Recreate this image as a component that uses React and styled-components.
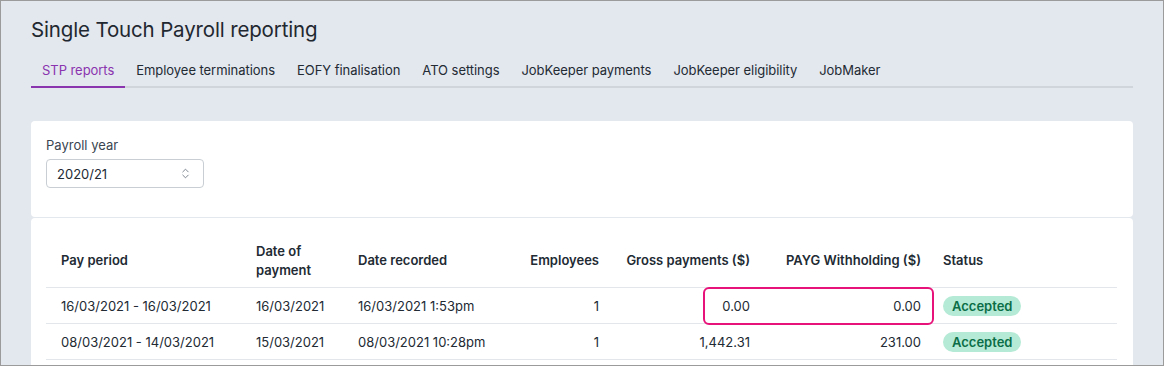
import React from "react";
import styled, { createGlobalStyle } from "styled-components";
import { ChevronsUpDown } from "lucide-react";

const GlobalStyle = createGlobalStyle`
  html, body {
    margin: 0;
    padding: 0;
    background: #e3e7ee;
  }
  body {
    font-family: Inter, "Noto Sans", "Liberation Sans", sans-serif;
    color: #222a33;
  }
`;

const tabs = [
  "STP reports",
  "Employee terminations",
  "EOFY finalisation",
  "ATO settings",
  "JobKeeper payments",
  "JobKeeper eligibility",
  "JobMaker",
];

const rows = [
  {
    period: "16/03/2021 - 16/03/2021",
    paid: "16/03/2021",
    recorded: "16/03/2021 1:53pm",
    employees: "1",
    gross: "0.00",
    payg: "0.00",
    status: "Accepted",
    flagged: true,
  },
  {
    period: "08/03/2021 - 14/03/2021",
    paid: "15/03/2021",
    recorded: "08/03/2021 10:28pm",
    employees: "1",
    gross: "1,442.31",
    payg: "231.00",
    status: "Accepted",
  },
];

const columns = [
  { key: "period", label: "Pay period", width: 199 },
  { key: "paid", label: "Date of payment", width: 102 },
  { key: "recorded", label: "Date recorded", width: 167 },
  { key: "employees", label: "Employees", width: 96, right: true },
  { key: "gross", label: "Gross payments ($)", width: 151, right: true },
  { key: "payg", label: "PAYG Withholding ($)", width: 171, right: true },
  { key: "status", label: "Status", width: 185 },
];

function App() {
  return (
    <>
      <GlobalStyle />
      <Frame>
        <Title>Single Touch Payroll reporting</Title>
        <TabBar>
          {tabs.map((t, i) => (
            <Tab key={t} active={i === 0}>
              {t}
            </Tab>
          ))}
        </TabBar>

        <FilterCard>
          <Label>Payroll year</Label>
          <Select>
            <span>2020/21</span>
            <ChevronsUpDown size={13} strokeWidth={1.6} color="#6b7480" />
          </Select>
        </FilterCard>

        <TableCard>
          <Table>
            <colgroup>
              {columns.map((c) => (
                <col key={c.key} style={{ width: c.width }} />
              ))}
            </colgroup>
            <thead>
              <tr>
                {columns.map((c) => (
                  <Th key={c.key} right={c.right}>
                    {c.label}
                  </Th>
                ))}
              </tr>
            </thead>
            <tbody>
              {rows.map((r, i) => (
                <tr key={i}>
                  {columns.map((c) => (
                    <Td key={c.key} right={c.right}>
                      {c.key === "status" ? (
                        <Badge>{r.status}</Badge>
                      ) : (
                        r[c.key]
                      )}
                      {r.flagged && c.key === "gross" && <Highlight />}
                    </Td>
                  ))}
                </tr>
              ))}
            </tbody>
          </Table>
        </TableCard>
      </Frame>
    </>
  );
}

const Frame = styled.div`
  box-sizing: border-box;
  width: 1164px;
  height: 366px;
  border: 1px solid #9b9b9b;
  padding: 14px 30px 0 30px;
  overflow: hidden;
`;

const Title = styled.h1`
  margin: 0;
  font-size: 20.5px;
  font-weight: 400;
  line-height: 30px;
  color: #1f2830;
  letter-spacing: -0.15px;
`;

const TabBar = styled.div`
  display: flex;
  margin-top: 11px;
  border-bottom: 2px solid #d0d5db;
`;

const Tab = styled.div`
  padding: 6px 11px 7px 11px;
  margin-bottom: -2px;
  font-size: 13px;
  line-height: 17px;
  letter-spacing: -0.05px;
  color: ${(p) => (p.active ? "#8a34ae" : "#222a33")};
  border-bottom: 2px solid ${(p) => (p.active ? "#8a34ae" : "transparent")};
`;

const FilterCard = styled.div`
  margin-top: 33px;
  background: #fff;
  border-radius: 4px;
  padding: 15px 15px 29px 15px;
`;

const Label = styled.div`
  font-size: 13px;
  line-height: 18px;
  color: #3a4551;
`;

const Select = styled.div`
  box-sizing: border-box;
  margin-top: 5px;
  width: 158px;
  height: 29px;
  border: 1px solid #c9ced4;
  border-radius: 4px;
  display: flex;
  align-items: center;
  justify-content: space-between;
  padding: 0 11px 0 10px;
  font-size: 13px;
  color: #222a33;
`;

const TableCard = styled.div`
  margin-top: 1px;
  background: #fff;
  border-radius: 4px;
  padding: 16px 16px 24px 15px;
`;

const Table = styled.table`
  width: 1071px;
  table-layout: fixed;
  border-collapse: collapse;
  font-size: 13px;
  color: #222a33;
`;

const Th = styled.th`
  height: 53px;
  padding: 0 11px;
  text-align: ${(p) => (p.right ? "right" : "left")};
  vertical-align: middle;
  font-weight: 600;
  line-height: 19px;
  border-bottom: 1px solid #e3e7ec;
  &:first-child {
    padding-left: 15px;
  }
`;

const Td = styled.td`
  position: relative;
  height: 35px;
  padding: 0 11px;
  text-align: ${(p) => (p.right ? "right" : "left")};
  vertical-align: middle;
  line-height: 18px;
  border-bottom: 1px solid #e3e7ec;
  &:first-child {
    padding-left: 15px;
  }
`;

const Badge = styled.span`
  display: inline-block;
  padding: 1px 9px;
  border-radius: 10px;
  background: #b5ead6;
  color: #0b6e47;
  font-weight: 600;
  line-height: 18px;
`;

const Highlight = styled.div`
  position: absolute;
  left: 93px;
  top: -1px;
  width: 231px;
  height: 38px;
  box-sizing: border-box;
  border: 2px solid #e8137a;
  border-radius: 6px;
  pointer-events: none;
`;

export default App;
